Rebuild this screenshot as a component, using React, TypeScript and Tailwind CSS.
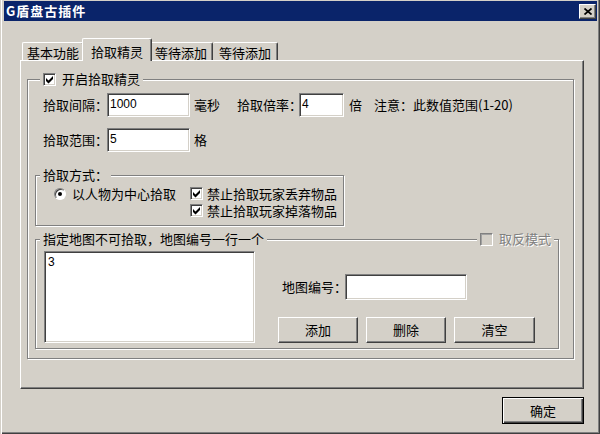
import React from "react";

const raised =
  "border border-t-white border-l-white border-r-[#404040] border-b-[#404040] shadow-[inset_-1px_-1px_0_#808080]";
const sunken =
  "border border-t-[#808080] border-l-[#808080] border-r-white border-b-white shadow-[inset_1px_1px_0_#404040,inset_-1px_-1px_0_#d4d0c8]";
const etched = "border border-[#808080] shadow-[1px_1px_0_#fff,inset_1px_1px_0_#fff]";

function Check({ checked = false, disabled = false }: { checked?: boolean; disabled?: boolean }) {
  return (
    <div
      className={`w-[13px] h-[13px] shrink-0 ${sunken} ${disabled ? "bg-[#d4d0c8]" : "bg-white"}`}
    >
      {checked && (
        <svg width="11" height="11" viewBox="0 0 11 11" className="block">
          <polygon points="2,4 4.5,6.5 9,2 9,5 4.5,9.5 2,7" fill="#000" />
        </svg>
      )}
    </div>
  );
}

function Radio() {
  return (
    <div className="w-[12px] h-[12px] shrink-0 rounded-full bg-white border border-t-[#808080] border-l-[#808080] border-r-white border-b-white shadow-[inset_1px_1px_0_#404040] flex items-center justify-center">
      <div className="w-[4px] h-[4px] rounded-full bg-black" />
    </div>
  );
}

function Field({ w, h = "h-[24px]", value }: { w: string; h?: string; value?: string }) {
  return (
    <div
      className={`${w} ${h} shrink-0 bg-white ${sunken} pl-[2px] pt-[3px] text-[12px] leading-[14px] font-['Liberation_Sans',Arial,sans-serif]`}
    >
      {value}
    </div>
  );
}

function Btn({ w, label }: { w: string; label: string }) {
  return (
    <div className={`${w} h-[26px] ${raised} flex items-center justify-center text-black`}>{label}</div>
  );
}

export default function App() {
  return (
    <div className="w-[600px] h-[434px] whitespace-nowrap bg-[#d4d0c8] pl-[4px] pr-[3px] pt-[1px] text-[13px] leading-[16px] text-black font-['Noto_Sans_CJK_SC',sans-serif] shadow-[inset_1px_0_0_#d4d0c8,inset_2px_0_0_#fff,inset_-1px_-1px_0_#404040,inset_-2px_-2px_0_#808080] overflow-hidden">
      {/* Title bar */}
      <div className="h-[20px] bg-[#0a246a] flex items-center justify-between pl-[2px] pr-[1px]">
        <span className="text-white font-bold text-[13px] tracking-[1px] leading-[16px]">G盾盘古插件</span>
        <div className={`w-[17px] h-[15px] bg-[#d4d0c8] ${raised} flex items-center justify-center`}>
          <svg width="8" height="7" viewBox="0 0 8 7" className="block">
            <path d="M0.5 0.5 L7.5 6.5 M7.5 0.5 L0.5 6.5" stroke="#000" strokeWidth="1.7" />
          </svg>
        </div>
      </div>

      {/* Tabs */}
      <div className="mt-[17px] pl-[18px] flex items-end">
        <div className="w-[62px] h-[18px] border-t border-l border-t-white border-l-white border-r border-r-[#404040] shadow-[inset_-1px_0_0_#808080] rounded-t-[2px] flex justify-center pt-[2px]">
          基本功能
        </div>
        <div className="relative z-10 w-[70px] h-[23px] -mx-[2px] -mb-[1px] bg-[#d4d0c8] border-t border-l border-t-white border-l-white border-r border-r-[#404040] shadow-[inset_-1px_0_0_#808080] rounded-t-[2px] flex justify-center pt-[5px]">
          拾取精灵
        </div>
        <div className="w-[63px] h-[18px] border-t border-t-white border-r border-r-[#404040] shadow-[inset_-1px_0_0_#808080] rounded-t-[2px] flex justify-center pt-[2px]">
          等待添加
        </div>
        <div className="w-[65px] h-[18px] border-t border-t-white border-r border-r-[#404040] shadow-[inset_-1px_0_0_#808080] rounded-t-[2px] flex justify-center pt-[2px]">
          等待添加
        </div>
      </div>

      {/* Tab panel */}
      <div className={`ml-[16px] w-[564px] h-[329px] ${raised}`}>
        <div className={`ml-[6px] mt-[18px] w-[547px] h-[280px] ${etched}`}>
          <div className="-mt-[9px] h-[16px] pl-[12px] flex">
            <div className="bg-[#d4d0c8] px-[3px] flex items-center gap-[6px]">
              <Check checked />
              <span>开启拾取精灵</span>
            </div>
          </div>

          <div className="mt-[6px] pl-[15px] h-[24px] flex items-center">
            <span className="w-[64px] shrink-0">拾取间隔：</span>
            <Field w="w-[83px]" value="1000" />
            <span className="w-[47px] shrink-0 pl-[4px]">毫秒</span>
            <span className="w-[62px] shrink-0">拾取倍率：</span>
            <Field w="w-[45px]" value="4" />
            <span className="w-[30px] shrink-0 pl-[5px]">倍</span>
            <span>注意：此数值范围(1-20)</span>
          </div>

          <div className="mt-[11px] pl-[15px] h-[24px] flex items-center">
            <span className="w-[64px] shrink-0">拾取范围：</span>
            <Field w="w-[83px]" value="5" />
            <span className="pl-[4px]">格</span>
          </div>

          <div className={`mt-[23px] ml-[7px] w-[309px] h-[51px] ${etched}`}>
            <div className="-mt-[9px] h-[16px] pl-[4px] flex">
              <span className="bg-[#d4d0c8] px-[3px]">拾取方式：</span>
            </div>
            <div className="mt-[2px] flex">
              <div className="w-[154px] shrink-0 pl-[18px] h-[17px] flex items-center gap-[6px]">
                <Radio />
                <span>以人物为中心拾取</span>
              </div>
              <div className="flex flex-col">
                <div className="h-[17px] flex items-center gap-[4px]">
                  <Check checked />
                  <span>禁止拾取玩家丢弃物品</span>
                </div>
                <div className="h-[17px] flex items-center gap-[4px]">
                  <Check checked />
                  <span>禁止拾取玩家掉落物品</span>
                </div>
              </div>
            </div>
          </div>

          <div className={`mt-[13px] ml-[7px] w-[524px] h-[110px] ${etched}`}>
            <div className="-mt-[9px] h-[16px] px-[4px] flex justify-between">
              <span className="bg-[#d4d0c8] px-[3px]">指定地图不可拾取，地图编号一行一个</span>
              <div className="bg-[#d4d0c8] px-[3px] flex items-center gap-[6px]">
                <div className="w-[13px] h-[13px] border border-t-[#808080] border-l-[#808080] border-r-white border-b-white shadow-[inset_1px_1px_0_#a0a0a0]" />
                <span className="text-[#808080] [text-shadow:1px_1px_0_#fff]">取反模式</span>
              </div>
            </div>
            <div className="mt-[4px] pl-[8px] flex">
              <div
                className={`w-[211px] h-[92px] shrink-0 bg-white ${sunken} pl-[3px] pt-[3px] text-[12px] leading-[14px] font-['Liberation_Sans',Arial,sans-serif]`}
              >
                3
              </div>
              <div className="ml-[23px] flex flex-col">
                <div className="mt-[23px] flex items-center">
                  <span className="w-[67px] shrink-0 pl-[4px]">地图编号：</span>
                  <Field w="w-[122px]" h="h-[26px]" />
                </div>
                <div className="mt-[17px] flex gap-[8px]">
                  <Btn w="w-[80px]" label="添加" />
                  <Btn w="w-[80px]" label="删除" />
                  <Btn w="w-[81px]" label="清空" />
                </div>
              </div>
            </div>
          </div>
        </div>
      </div>

      {/* Bottom button */}
      <div className="mt-[8px] w-[580px] flex justify-end">
        <div className="w-[82px] h-[27px] border border-black shadow-[inset_1px_1px_0_#fff,inset_-1px_-1px_0_#404040,inset_-2px_-2px_0_#808080] flex items-center justify-center">
          确定
        </div>
      </div>
    </div>
  );
}
